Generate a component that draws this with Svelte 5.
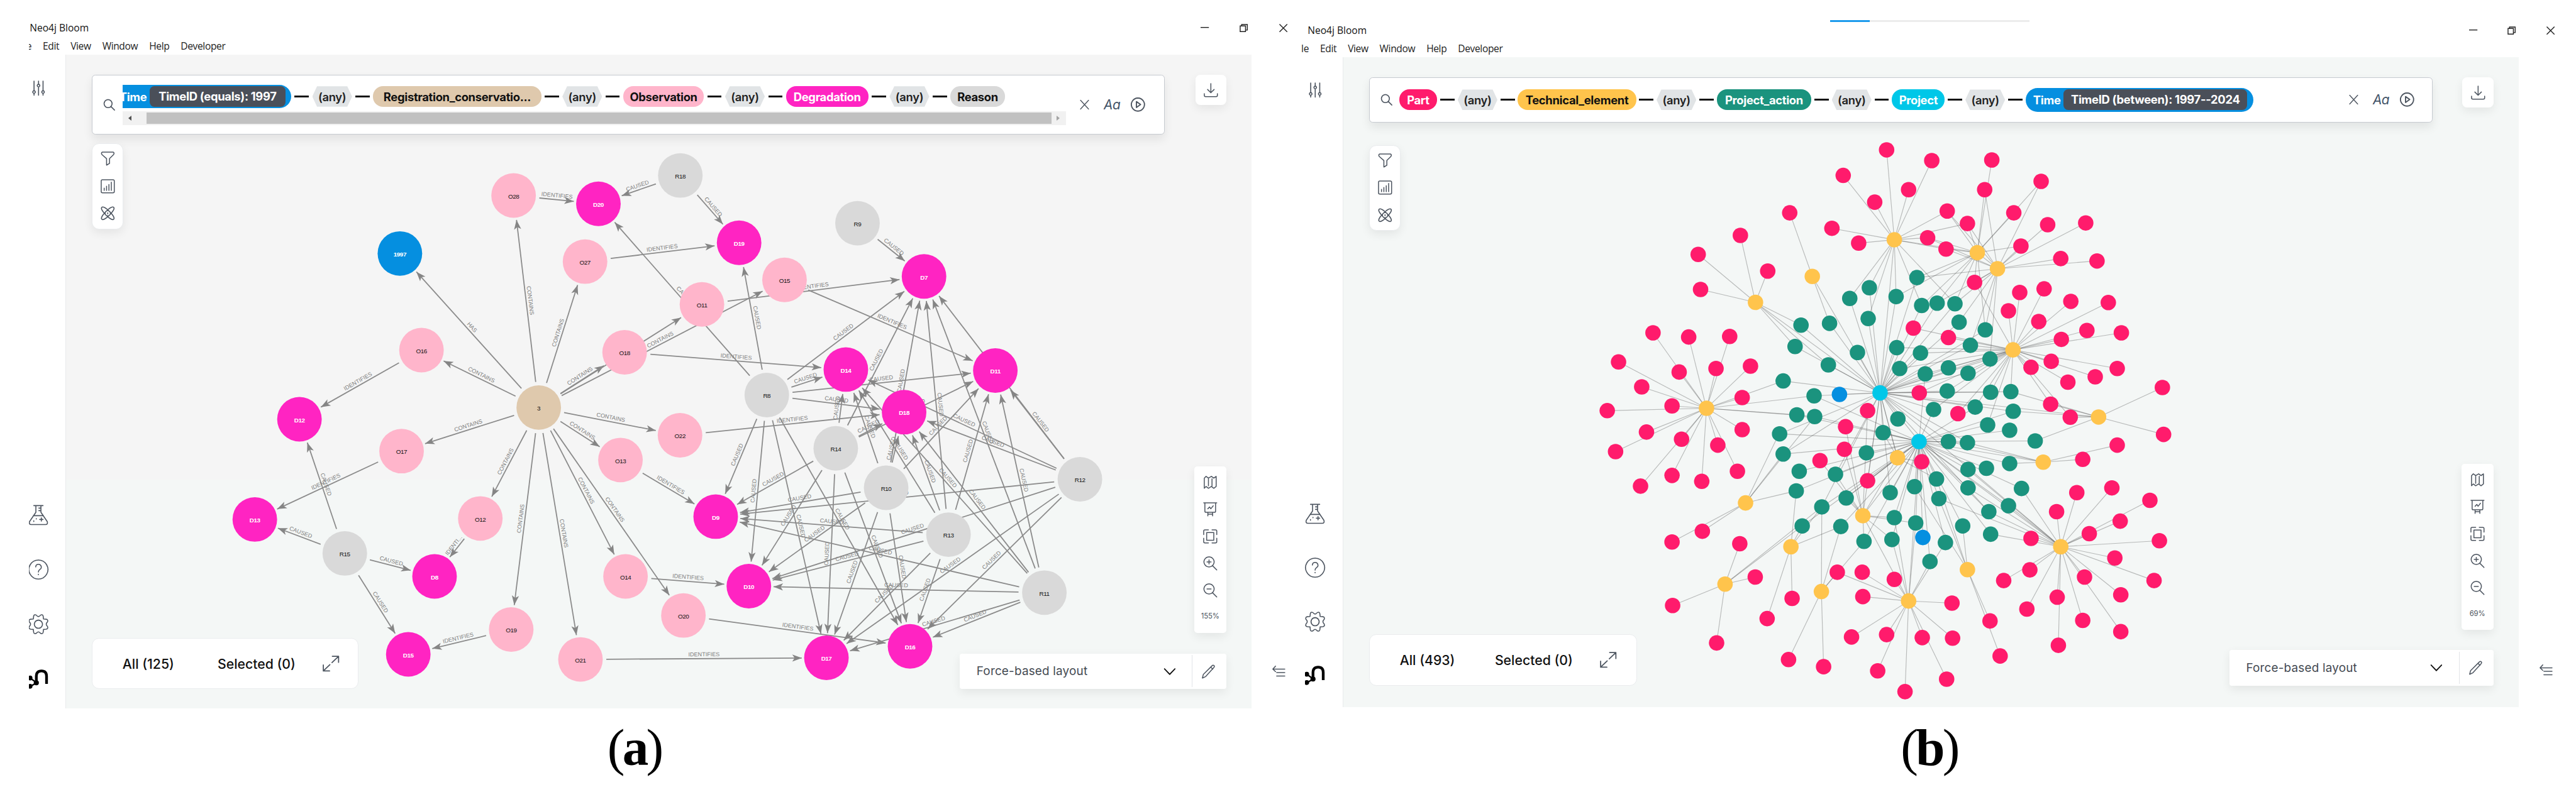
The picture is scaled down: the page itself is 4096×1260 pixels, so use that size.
<script>
    const icons = {
        sliders: "M5 1v15M5 20v3M12 1v5M12 10v13M19 1v15M19 20v3M5 16a2 2 0 1 0 .01 0M12 6a2 2 0 1 0 .01 0M19 16a2 2 0 1 0 .01 0",
        flask: "M6.500 1h11M9 1v8L1.500 20Q.5 23.500 3.500 23.500h17q3 0 2-3.500L15 9V1M6 13h12M12.500 4H15M12.500 7H15M15.500 15.500v4M13.500 17.500h4M6.500 19v1M9.500 16.500v.5",
        help: "M12 .7a11.300 11.300 0 1 0 .01 0M8.800 9a3.300 3.300 0 1 1 4.800 3q-1.600 1-1.600 3M12 17.600v.6",
        gear: "M9.500 1.200q-2.800-1.300-3.200 1.500l-.3 3.100-3.100.3q-2.800.4-1.700 3.200 3 2.700 0 5.400-1.100 2.800 1.700 3.200l3.100.3.3 3.100q.4 2.800 3.200 1.500 2.500-3.400 5 0 2.800 1.300 3.200-1.500l.3-3.100 3.100-.3q2.800-.4 1.700-3.200-3-2.700 0-5.400 1.100-2.800-1.700-3.200l-3.100-.3-.3-3.100q-.4-2.800-3.200-1.500-2.500 3.400-5 0zM12 7.200a4.800 4.800 0 1 0 .01 0",
        search: "M10 2a8 8 0 1 0 .01 0M16 16l7 7",
        close: "M3 2l18 20M21 2L3 22",
        play: "M12 1a11 11 0 1 0 .01 0M9.500 7l7 5-7 5z",
        download: "M12 1v15M6.500 11l5.500 5.500 5.500-5.500M1 18v3q0 2 2 2h18q2 0 2-2v-3",
        filter: "M3 1h18q2.500 1 1 4l-7 7v8l-5 3V12L2 5Q.5 2 3 1z",
        chart: "M3 1h18q2 0 2 2v18q0 2-2 2H3q-2 0-2-2V3q0-2 2-2zM6 19v-4M10 19v-7M14 19V9M18 19V5",
        atom: "M2 2c4-4 24 16 20 20S-2 6 2 2zM22 2c4 4-16 24-20 20S18-2 22 2zM12 7.500a4.500 4.500 0 1 0 .01 0M12 11v2",
        map: "M2 5l3-3 4 3 5-3 4 3 4-3v17l-4 3-4-3-5 3-4-3-3 3zM9 6v12M15 6v12",
        board: "M1 1h22M3 1v14q0 2 2 2h14q2 0 2-2V1M8 17v6M16 17v6M8 20h8M8 11l3-3 2 3 4-5",
        frame: "M6 5.500h12v13H6zM1 9V3q0-2 2-2h6M15 1h6q2 0 2 2v6M23 15v6q0 2-2 2h-6M9 23H3q-2 0-2-2v-6",
        zoomIn: "M10 1a8.500 8.500 0 1 0 .01 0M16 16l7 7M10 6v7M6.500 9.500h7",
        zoomOut: "M10 1a8.500 8.500 0 1 0 .01 0M16 16l7 7M6.500 9.500h7",
        expand: "M14 1h9v9M23 1l-9.500 9.500M10 23H1v-9M1 23l9.500-9.500",
        chevron: "M2 7l10 10L22 7",
        pencil: "M2 23l1.500-6L18 2.500q2-2 3.500-.5t-.5 3.500L7.500 20.500zM16 4.500l3.500 3.500",
        collapse: "M1 7h22M6 1L1 7l5 5M8 14h15M8 21h15",
    };

    const colors = { D: "#ff24c2", O: "#ffb5cb", R: "#d9d9d9", T: "#058fe0", C: "#dfc9ad" };

    const nodes = {
        O28: [864, 329], D20: [1006.700, 343], R18: [1144.500, 295.300], R9: [1442.600, 375.700],
        D19: [1243.400, 408.700], O15: [1319.800, 471], D7: [1554.500, 465.300], O11: [1180.900, 512.300],
        D14: [1423, 622], R8: [1290, 665], D11: [1674.500, 623.700], D18: [1521, 693.700],
        O22: [1144, 732.700], R14: [1406, 754.700], R10: [1490.800, 821], R12: [1816.800, 806.700],
        T1997: [672.700, 426.700], O27: [984.200, 440.300], O16: [709, 589.300], O18: [1050.800, 593],
        C3: [906.300, 686], D12: [503.700, 705.700], O17: [675.500, 759.300], O13: [1043.800, 774.300],
        D13: [428.600, 874.400], O12: [808, 872.700], R15: [580, 931.500], D8: [731, 970.300],
        O14: [1052.300, 970.300], D15: [686.800, 1101.500], O19: [860, 1059.700], O21: [976.500, 1110],
        D9: [1204, 869.600], D10: [1259.800, 986.700], O20: [1149.700, 1036], R13: [1595.700, 900],
        R11: [1757, 997.600], D17: [1390.300, 1107.300], D16: [1531, 1088],
    };

    const relations = [
        ["HAS", "C3", "T1997"],
        ["CONTAINS", "C3", "O28 O27 O16 O18 O11 O15 O17 O22 O13 O12 O19 O21 O14 O20"],
        ["IDENTIFIES", "O28", "D20"],
        ["IDENTIFIES", "O27", "D19"],
        ["IDENTIFIES", "O16", "D12"],
        ["IDENTIFIES", "O17", "D13"],
        ["IDENTI...", "O12", "D8"],
        ["IDENTIFIES", "O19", "D15"],
        ["IDENTIFIES", "O21", "D17"],
        ["IDENTIFIES", "O14", "D10"],
        ["IDENTIFIES", "O20", "D16"],
        ["IDENTIFIES", "O13", "D9"],
        ["IDENTIFIES", "O22", "D18"],
        ["IDENTIFIES", "O18", "D14"],
        ["IDENTIFIES", "O11", "D7"],
        ["IDENTIFIES", "O15", "D11"],
        ["CAUSED", "R18", "D20 D19"],
        ["CAUSED", "R9", "D7"],
        ["CAUSED", "R15", "D12 D13 D8 D15"],
        ["CAUSED", "R8", "D20 D19 D7 D14 D11 D18 D9 D10 D17 D16"],
        ["CAUSED", "R14", "D7 D14 D18 D11 D9 D10 D17 D16"],
        ["CAUSED", "R10", "D7 D14 D18 D11 D9 D10 D17 D16"],
        ["CAUSED", "R13", "D7 D14 D18 D11 D9 D10 D17 D16"],
        ["CAUSED", "R11", "D7 D14 D18 D11 D9 D10 D17 D16"],
        ["CAUSED", "R12", "D7 D14 D18 D11 D9 D10 D17 D16"],
    ];

    const edges = relations.flatMap(([label, from, targets]) =>
        targets.split(" ").map((to) => {
            const [x1, y1] = nodes[from];
            const [x2, y2] = nodes[to];
            const length = Math.hypot(x2 - x1, y2 - y1);
            const ux = (x2 - x1) / length;
            const uy = (y2 - y1) / length;
            const start = [x1 + ux * 43.500, y1 + uy * 43.500];
            const end = [x2 - ux * 41.500, y2 - uy * 41.500];
            const angle = (Math.atan2(uy, ux) * 180) / Math.PI;
            // keep the captions readable from the left
            const turn = angle > 90 ? angle - 180 : angle <= -90 ? angle + 180 : angle;
            return { label, start, end, angle, turn, mid: [(start[0] + end[0]) / 2, (start[1] + end[1]) / 2] };
        })
    );

    const pairs = (text) => text.split(" ").filter(Boolean).map((p) => p.split(",").map(Number));

    // own = parts that belong to the element, shared = nodes drawn by something else
    const elements = [
        { at: [3187, 403.300], own: "3174,252 3250,270 3101,295 3211,319 3154,340 3082,384 3127,409 3243,400", shared: "3276,355 3310,376 3274,419 3327,425 3112,502 3145,484 3143,536 3190,499 3233,514 3289,511 3163,661" },
        { at: [3326.600, 425], own: "3276,355 3310,376 3351,269 3339,319 3388,358 3274,419 3400,414", shared: "3243,400 3434,305 3225,467 3190,499 3259,510 3233,514 3289,511 3340,555 3361,452 3322,475" },
        { at: [3360.600, 452], own: "3434,305 3445,378 3509,375 3467,435 3528,439 3322,475", shared: "3276,355 3310,376 3274,419 3339,319 3400,414 3225,467 3259,510 3289,511 3296,542 3340,555 3315,581 3348,604 3243,400" },
        { at: [3386.600, 588.700], own: "3398,492 3439,486 3484,507 3547,509 3379,523 3430,541 3219,552 3278,568 3511,556 3569,560 3468,571 3451,608 3417,618 3562,620 3525,634 3479,643 3450,680 3229,661 3294,696", shared: "3322,475 3483,702 3191,585 3231,594 3196,620 3278,619 3239,629 3311,628 3348,604 3276,658 3253,689 3383,659 3323,685 3349,660 3315,581 3163,661 3344,715" },
        { at: [2953.400, 508.700], own: "2857,428 2928,396 2974,456 2861,487", shared: "3030,547 3020,583 3076,614 3163,661" },
        { at: [3049, 465], own: "3011,358", shared: "3078,544 3163,661" },
        { at: [2871, 687], own: "2781,560 2841,567 2910,566 2723,609 2825,626 2887,620 2945,616 2762,651 2931,669 2813,683 2704,691 2770,727 2931,723 2829,739 2890,749 2718,760 2923,793 2813,800 2863,810 2760,818", shared: "3000,641 3052,666 3023,698 3053,701" },
        { at: [3530.600, 701.700], own: "3638,652 3640,731 3483,702", shared: "3450,680 3383,659 3387,692 3424,742" },
        { at: [3437.500, 777.700], own: "3562,749 3504,773", shared: "3381,780 3310,745 3278,743 3229,743" },
        { at: [3192.400, 770.300], own: "3233,777 3142,809", shared: "3229,743 3168,728 3163,661 3106,838 3258,806" },
        { at: [2936.700, 846.300], own: "2864,894 2813,912", shared: "3022,826 2993,730 3000,764 3053,701" },
        { at: [3134, 867.800], own: "3105,718 3103,756 3142,691 3062,775", shared: "3187,871 3223,880 3136,911 3183,908 3106,838 3088,798 3163,661 3229,743 3192,770" },
        { at: [3013, 920], own: "3015,1007 2973,1041", shared: "3032,885 3097,886 3065,853 3022,826" },
        { at: [2902.200, 983], own: "2927,915 2953,971 2814,1019 2888,1082", shared: "3032,885 3065,853" },
        { at: [3064.300, 995.500], own: "3009,1110 3068,1122 3091,963", shared: "3065,853 3097,886 3136,911" },
        { at: [3211, 1011.400], own: "3133,963 3187,975 3134,1004 3284,1015 3115,1072 3174,1068 3234,1073 3285,1074 3159,1129 3205,1164 3275,1143", shared: "3091,963 3183,908 3187,871 3223,880 3247,945 3273,913 3134,868 3229,743" },
        { at: [3467, 920], own: "3553,821 3494,829 3617,842 3460,861 3567,877 3417,906 3515,898 3633,910 3415,959 3558,939 3371,977 3507,971 3624,977 3461,1005 3410,1025 3568,1001 3504,1044 3568,1063 3463,1086", shared: "3346,861 3379,851 3349,899 3401,822 3311,790 3311,821 3262,839 3229,743" },
        { at: [3310, 958.600], own: "3348,1045 3365,1104", shared: "3302,885 3262,839 3258,806 3221,819" },
    ].map((e) => ({ at: e.at, own: pairs(e.own), shared: pairs(e.shared) }));

    const projects = [
        { at: [3163, 661], time: [3094.700, 663.700], own: pairs("3225,467 3145,484 3112,502 3190,499 3233,514 3259,510 3289,511 3143,536 3078,544 3030,547 3296,542 3340,555 3020,583 3125,593 3191,585 3231,594 3315,581 3348,604 3076,614 3196,620 3278,619 3239,629 3311,628 3000,641 3052,666 3276,658 3349,660 3383,659 3253,689 3323,685 3387,692 3193,705 3168,728"), shared: pairs("2994,730 3000,764 3088,798 3065,853 3311,745 3278,743 3346,861 3229,743 3180,829 3531,702 3467,920 3192,770 3142,809") },
        { at: [3228.600, 743], time: [3235, 904.500], own: pairs("3023,698 3053,701 3344,715 3381,724 2994,730 3278,743 3310,745 3424,742 3000,764 3140,762 3027,793 3088,798 3311,790 3342,788 3381,780 3258,806 3221,819 3311,821 3401,822 3022,826 3180,829 3106,838 3262,839 3065,853 3032,885 3097,886 3187,871 3223,880 3136,911 3183,908 3273,913 3247,945 3302,885 3346,861 3379,851 3349,899"), shared: pairs("3052,666 3168,728 3253,689 3323,685 3387,692 3239,629") },
    ];

    const any = (w = 67) => ({ kind: "any", text: "(any)", w });

    const windows = [
        {
            id: "a", caption: "a", menu: ["e", "Edit", "View", "Window", "Help", "Developer"],
            count: 125, zoom: "155%", scroll: true,
            chips: [
                { kind: "time", text: "Time", filter: "TimeID (equals): 1997", w: 284, inner: 228 },
                any(), { kind: "tan", text: "Registration_conservatio...", w: 283 },
                any(), { kind: "rose", text: "Observation", w: 136 },
                any(), { kind: "magenta", text: "Degradation", w: 139 },
                any(), { kind: "grey", text: "Reason", w: 92 },
            ],
        },
        {
            id: "b", caption: "b", menu: ["le", "Edit", "View", "Window", "Help", "Developer"],
            count: 493, zoom: "69%", scroll: false,
            chips: [
                { kind: "red", text: "Part", w: 64 },
                any(), { kind: "yellow", text: "Technical_element", w: 199 },
                any(), { kind: "green", text: "Project_action", w: 159 },
                any(), { kind: "cyan", text: "Project", w: 89 },
                any(), { kind: "time", text: "Time", filter: "TimeID (between): 1997--2024", w: 383, inner: 309 },
            ],
        },
    ];
</script>

{#snippet icon(name)}
    <svg class="icon {name}" viewBox="0 0 24 24" preserveAspectRatio="none"><path d={icons[name]} /></svg>
{/snippet}

{#snippet conservationGraph()}
    <svg class="graph" viewBox="111 92 1995 1101">
        {#each edges as e}
            <line class="edge" x1={e.start[0]} y1={e.start[1]} x2={e.end[0]} y2={e.end[1]} />
            <path class="head" d="M0 0L-16 -6L-12 0L-16 6Z" transform="translate({e.end[0]} {e.end[1]}) rotate({e.angle})" />
            <text class="relation" transform="translate({e.mid[0]} {e.mid[1]}) rotate({e.turn})" y="-4">{e.label}</text>
        {/each}
        {#each Object.entries(nodes) as [id, [x, y]]}
            <circle cx={x} cy={y} r="37.5" fill={colors[id[0]]} />
            <text class="name" class:light={id[0] === "D" || id[0] === "T"} {x} y={y + 5}>
                {id[0] === "T" || id[0] === "C" ? id.slice(1) : id}
            </text>
        {/each}
    </svg>
{/snippet}

{#snippet projectGraph()}
    <svg class="graph" viewBox="2260 96 1978 1094">
        {#each [...elements, ...projects] as hub}
            {#each [...hub.own, ...hub.shared] as [x, y]}
                <line class="link" x1={hub.at[0]} y1={hub.at[1]} x2={x} y2={y} />
            {/each}
        {/each}
        {#each projects as p}
            <line class="link" x1={p.at[0]} y1={p.at[1]} x2={p.time[0]} y2={p.time[1]} />
            {#each p.own as [x, y]}
                <circle cx={x} cy={y} r="13" fill="#1b937e" />
            {/each}
        {/each}
        {#each elements as e}
            {#each e.own as [x, y]}
                <circle cx={x} cy={y} r="13" fill="#ff1b6c" />
            {/each}
            <circle cx={e.at[0]} cy={e.at[1]} r="13" fill="#ffc44c" />
        {/each}
        {#each projects as p}
            <circle cx={p.at[0]} cy={p.at[1]} r="13" fill="#00c7e8" />
            <circle cx={p.time[0]} cy={p.time[1]} r="13" fill="#058fe0" />
        {/each}
    </svg>
{/snippet}

<div class="page">
    {#each windows as win}
        <section class="window {win.id}">
            <header>
                <div class="titlebar">
                    <span class="title">Neo4j Bloom</span>
                    <svg class="control" viewBox="0 0 14 14"><path d="M0 6h14" /></svg>
                    <svg class="control" viewBox="0 0 14 14"><path d="M1 3.500h9v9.500h-9zM3.500 3.500V1h9.500v9.500h-3" /></svg>
                    <svg class="control" viewBox="0 0 14 14"><path d="M.5.5l13 13M13.500.5l-13 13" /></svg>
                </div>
                <nav>
                    {#each win.menu as item}
                        <span>{item}</span>
                    {/each}
                </nav>
                {#if !win.scroll}
                    <div class="progress"></div>
                {/if}
            </header>
            <div class="body">
                <aside>
                    {@render icon("sliders")}
                    <div class="spacer"></div>
                    {@render icon("flask")}
                    {@render icon("help")}
                    {@render icon("gear")}
                    <svg class="icon logo" viewBox="0 0 34 34">
                        <path d="M13.500 22V12.500q0-9 8.700-9 8.500 0 8.500 9V25.500" />
                        <path class="bond" d="M3 15.500l11 8L3 30" />
                        <circle cx="3" cy="15.500" r="4" />
                        <circle cx="13.500" cy="23.500" r="4.300" />
                        <circle cx="3" cy="29.500" r="4" />
                    </svg>
                </aside>
                <main>
                    {#if win.id === "a"}
                        {@render conservationGraph()}
                    {:else}
                        {@render projectGraph()}
                    {/if}
                    <div class="top">
                        <div class="search">
                            {@render icon("search")}
                            <div class="query">
                                <div class="chips">
                                    {#each win.chips as chip, i}
                                        {#if i > 0}
                                            <i class="dash"></i>
                                        {/if}
                                        <span class="chip {chip.kind}" style="width: {chip.w}px">
                                            {chip.text}
                                            {#if chip.filter}
                                                <b style="width: {chip.inner}px">{chip.filter}</b>
                                            {/if}
                                        </span>
                                    {/each}
                                </div>
                                {#if win.scroll}
                                    <div class="scrollbar">
                                        <i class="prev"></i>
                                        <i class="thumb"></i>
                                        <i class="next"></i>
                                    </div>
                                {/if}
                            </div>
                            {@render icon("close")}
                            <em>Aa</em>
                            {@render icon("play")}
                        </div>
                        <div class="card export">{@render icon("download")}</div>
                    </div>
                    <div class="card tools">
                        {@render icon("filter")}
                        {@render icon("chart")}
                        {@render icon("atom")}
                    </div>
                    <div class="bottom">
                        <div class="card stats">
                            <span class="all">All ({win.count})</span>
                            <span class="selected">Selected (0)</span>
                            {@render icon("expand")}
                        </div>
                        <div class="right">
                            <div class="card zoom">
                                {@render icon("map")}
                                {@render icon("board")}
                                {@render icon("frame")}
                                {@render icon("zoomIn")}
                                {@render icon("zoomOut")}
                                <small>{win.zoom}</small>
                            </div>
                            <div class="card layout">
                                <span>Force-based layout</span>
                                {@render icon("chevron")}
                                <div class="edit">{@render icon("pencil")}</div>
                            </div>
                        </div>
                    </div>
                </main>
                <div class="rail">{@render icon("collapse")}</div>
            </div>
            <footer>(<b>{win.caption}</b>)</footer>
        </section>
    {/each}
</div>

<style>
    :global(body) {
        background: #fff;
        overflow: hidden;
    }
    .page {
        zoom: 0.94509;
        display: flex;
        width: 4334px;
        height: 1333px;
        overflow: hidden;
        background: #fff;
        font-family: Inter, "Open Sans", sans-serif;
        color: #111;
    }
    .page :global(*) {
        box-sizing: border-box;
    }
    .window {
        display: flex;
        flex-direction: column;
        flex: none;
        overflow: hidden;
    }
    .window.a {
        --top: 32px;
        --base: 33px;
        --gap: 58px;
        width: 2118px;
        margin-left: 49px;
    }
    .window.b {
        --top: 36px;
        --base: 36px;
        --gap: 57px;
        width: 2145px;
        margin-left: 22px;
    }

    header {
        position: relative;
        padding-top: var(--top);
        font-family: "Open Sans", "Noto Sans", sans-serif;
        font-size: 16.5px;
        color: #222;
    }
    .titlebar {
        display: flex;
        align-items: center;
        gap: 52px;
        height: 30px;
        padding: 0 1px;
    }
    .b .titlebar {
        gap: 51px;
        padding: 0 36px 0 11px;
    }
    .title {
        margin-right: auto;
        color: #111;
    }
    .control {
        width: 14px;
        height: 14px;
        overflow: visible;
    }
    .control path {
        fill: none;
        stroke: #222;
        stroke-width: 1.5;
    }
    nav {
        display: flex;
        align-items: center;
        gap: 19px;
        height: 30px;
        letter-spacing: -0.4px;
    }
    nav span:first-child {
        width: 4px;
        direction: rtl;
        overflow: hidden;
    }
    .b nav span:first-child {
        width: 13px;
    }
    .progress {
        position: absolute;
        left: 890px;
        top: 34px;
        width: 336px;
        height: 3px;
        background: linear-gradient(90deg, #1d9bec 67px, #ececec 67px);
    }

    .body {
        display: flex;
        height: 1101px;
        flex: none;
    }
    .b .body {
        height: 1094px;
    }
    aside {
        display: flex;
        flex-direction: column;
        gap: var(--gap);
        width: 62px;
        padding: 43px 0 var(--base);
        border-right: 2px solid #e9eaec;
    }
    .b aside {
        width: 71px;
        padding-left: 8px;
    }
    .spacer {
        flex: 1;
    }
    .icon {
        flex: none;
        width: 24px;
        height: 24px;
        overflow: visible;
    }
    .icon path {
        fill: none;
        stroke: #4d5560;
        stroke-width: 1.6;
        stroke-linecap: round;
        stroke-linejoin: round;
    }
    aside .icon {
        width: 34px;
        height: 34px;
        margin-left: -1px;
    }
    aside .sliders {
        width: 26px;
        height: 26px;
        margin-left: 3px;
    }
    aside .icon path {
        stroke-width: 1.2;
    }
    aside .sliders path {
        stroke-width: 1.6;
    }
    aside .logo {
        overflow: hidden;
    }
    aside .logo path {
        stroke: #000;
        stroke-width: 4.6;
        stroke-linecap: butt;
    }
    aside .logo .bond {
        stroke-width: 2.5;
    }

    main {
        position: relative;
        display: flex;
        flex-direction: column;
        width: 1995px;
        padding: 34px 43px var(--base) 44px;
        background: linear-gradient(#f5f5f5 715px, #f4f7f6 715px);
    }
    .b main {
        width: 1978px;
        padding-top: 34px;
        background: #f4f7f6;
    }
    .graph {
        position: absolute;
        inset: 0;
        width: 100%;
        height: 100%;
    }
    .edge {
        stroke: #8b8b8b;
        stroke-width: 1.9;
    }
    .head {
        fill: #858585;
    }
    .relation {
        font: 9.6px "Liberation Sans", Arial, sans-serif;
        fill: #808080;
        text-anchor: middle;
    }
    .name {
        font: 10.5px "Liberation Sans", Arial, sans-serif;
        letter-spacing: -0.5px;
        fill: #111;
        text-anchor: middle;
    }
    .name.light {
        fill: #fff;
        font-weight: bold;
    }
    .link {
        stroke: #444;
        stroke-opacity: 0.34;
        stroke-width: 1.2;
    }

    .top,
    .tools,
    .bottom {
        position: relative;
    }
    .top {
        display: flex;
        justify-content: space-between;
        align-items: flex-start;
    }
    .search {
        display: flex;
        align-items: center;
        width: 1805px;
        height: 100px;
        padding: 0 30px 0 17px;
        border: 2px solid #c6cad0;
        border-radius: 6px;
        background: #fff;
        box-shadow: 0 8px 16px rgba(0, 0, 0, 0.08);
    }
    .b .search {
        width: 1789px;
        height: 76px;
    }
    .search .icon.search {
        width: 20px;
        height: 20px;
        padding: 0;
        border: 0;
        border-radius: 0;
        background: none;
        box-shadow: none;
    }
    .search .icon path {
        stroke-width: 2;
    }
    .query {
        width: 1587px;
        margin: 0 23px 0 13px;
        overflow: hidden;
    }
    .b .query {
        width: 1595px;
        margin: 0 14px 0 12px;
    }
    .a .query {
        padding-top: 1px;
    }
    .chips {
        display: flex;
        align-items: center;
        gap: 5.7px;
        height: 41px;
        margin-bottom: 4px;
    }
    .b .chips {
        gap: 5.2px;
        margin: 0;
    }
    .chip {
        display: flex;
        flex: none;
        justify-content: center;
        align-items: center;
        height: 34.5px;
        border-radius: 17px;
        font-size: 19.5px;
        font-weight: 700;
        letter-spacing: -0.35px;
        white-space: nowrap;
    }
    .any {
        border-radius: 0;
        background: #e1e4e6;
        color: #222;
        clip-path: polygon(12% 0, 88% 0, 100% 50%, 88% 100%, 12% 100%, 0 50%);
        font-weight: 600;
    }
    .tan {
        background: #dfc9ad;
    }
    .rose {
        background: #ffb5cb;
    }
    .magenta {
        background: #ff24c2;
        color: #fff;
    }
    .grey {
        background: #d9d9d9;
    }
    .red {
        background: #ff1b6c;
        color: #fff;
    }
    .yellow {
        background: #ffc44c;
    }
    .green {
        background: #1b937e;
        color: #fff;
    }
    .cyan {
        background: #00c7e8;
        color: #fff;
    }
    .time {
        justify-content: flex-end;
        gap: 5px;
        height: 40px;
        padding-right: 10px;
        border-radius: 20px;
        background: #058fe0;
        color: #fff;
    }
    .a .time {
        border-radius: 0 20px 20px 0;
    }
    .time b {
        flex: none;
        border-radius: 8px;
        background: #4a4f59;
        font-weight: 700;
        line-height: 35px;
        text-align: center;
    }
    .dash {
        flex: none;
        width: 24px;
        height: 3px;
        background: #111;
    }
    .scrollbar {
        display: flex;
        align-items: center;
        height: 24px;
        background: #f1f1f1;
    }
    .thumb {
        width: 1523px;
        height: 19px;
        margin: 0 9px 0 31px;
        background: #c1c1c1;
    }
    .prev,
    .next {
        width: 6px;
        border: 5px solid transparent;
        border-width: 5px 6px;
    }
    .prev {
        margin: 0 -6px 0 9px;
        border-right-color: #505050;
        border-left: 0;
    }
    .next {
        border-left-color: #a3a3a3;
        border-right: 0;
    }
    .close {
        width: 18px;
        height: 18px;
    }
    em {
        width: 30px;
        margin: 0 16px 0 23px;
        font-size: 22px;
        letter-spacing: -0.5px;
        color: #3f5266;
    }
    .play {
        width: 24px;
        height: 24px;
    }

    .card {
        background: #fff;
        box-shadow: 0 6px 16px rgba(0, 0, 0, 0.07);
    }
    .export {
        display: flex;
        justify-content: center;
        align-items: center;
        width: 52px;
        height: 51px;
        border-radius: 8px;
    }
    .tools {
        display: flex;
        flex-direction: column;
        align-items: center;
        justify-content: center;
        gap: 22px;
        width: 52px;
        height: 145px;
        margin-top: 15px;
        border: 1px solid #eaecee;
        border-radius: 12px;
    }
    .b .tools {
        margin-top: 38px;
        height: 144px;
    }
    .bottom {
        display: flex;
        justify-content: space-between;
        align-items: flex-end;
        margin-top: auto;
    }
    .stats {
        display: flex;
        align-items: center;
        width: 448px;
        height: 86px;
        padding-left: 50px;
        border: 2px solid #eaecee;
        border-radius: 12px;
        box-shadow: none;
        font-size: 22.5px;
        font-weight: 500;
    }
    .b .stats {
        width: 450px;
    }
    .all {
        width: 160px;
    }
    .selected {
        width: 177px;
    }
    .expand {
        width: 28px;
        height: 27px;
    }
    .right {
        display: flex;
        flex-direction: column;
        align-items: flex-end;
        gap: 34px;
    }
    .zoom {
        display: flex;
        flex-direction: column;
        align-items: center;
        gap: 21.5px;
        width: 54px;
        height: 281px;
        padding-top: 15px;
        border-radius: 5px;
    }
    .b .zoom {
        height: 279px;
    }
    .zoom small {
        margin-top: 2px;
        font-size: 12px;
        line-height: 16px;
        letter-spacing: -0.2px;
        color: #4d5560;
    }
    .layout {
        display: flex;
        align-items: center;
        width: 448px;
        height: 60px;
        padding-left: 28px;
        border-radius: 4px;
        font-size: 20px;
        letter-spacing: 0.2px;
        color: #444a52;
    }
    .b .layout {
        width: 444px;
    }
    .layout span {
        width: 314px;
    }
    .b .layout span {
        width: 310px;
    }
    .layout .chevron {
        width: 21px;
        height: 22px;
    }
    .chevron path {
        stroke: #111;
        stroke-width: 2.2;
    }
    .edit {
        display: flex;
        justify-content: center;
        align-items: center;
        width: 58px;
        height: 54px;
        margin-left: auto;
        padding-right: 3px;
        border-left: 1px solid #e2e4e7;
    }
    .rail {
        display: flex;
        align-items: flex-end;
        padding: 0 0 52px 35px;
    }
    .rail .collapse {
        width: 22px;
        height: 20px;
    }
    .rail .collapse path {
        stroke-width: 1.8;
    }
    footer {
        padding: 13px 0 0 973px;
        font-family: "Liberation Serif", "Times New Roman", serif;
        font-size: 88px;
        line-height: 104px;
        letter-spacing: -4px;
        color: #000;
    }
    .b footer {
        padding: 16px 0 0 1009px;
    }
</style>
